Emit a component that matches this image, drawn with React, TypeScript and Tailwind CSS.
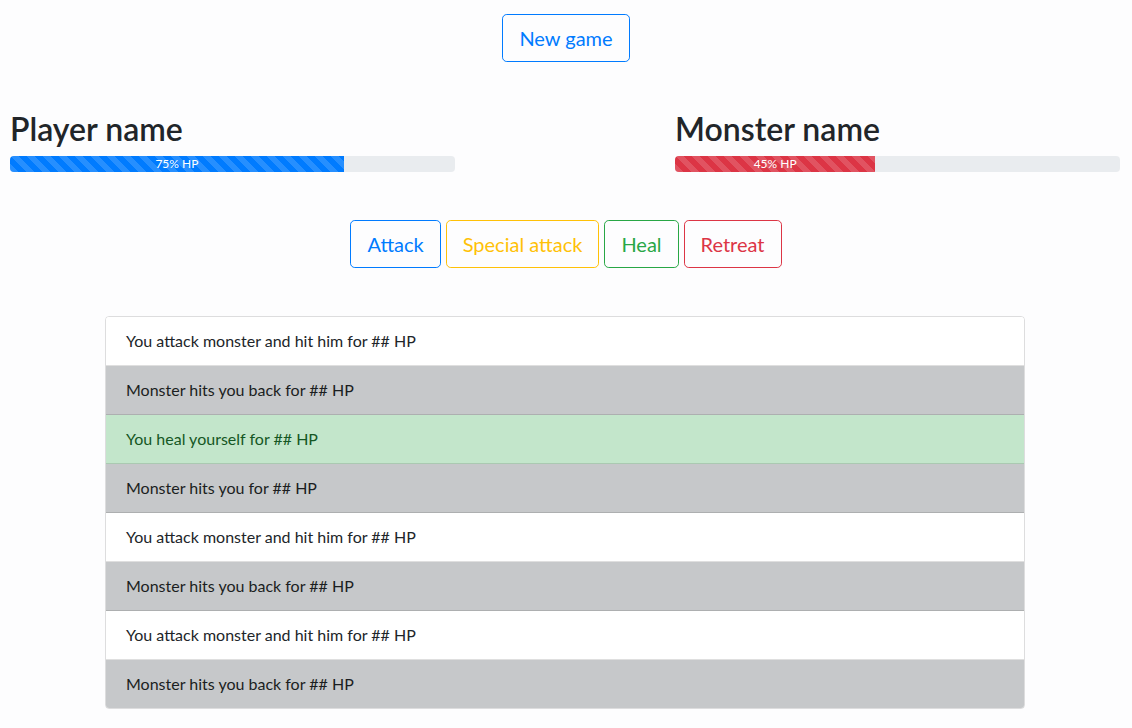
const stripes =
    'bg-[linear-gradient(45deg,rgba(255,255,255,.15)_25%,transparent_25%,transparent_50%,rgba(255,255,255,.15)_50%,rgba(255,255,255,.15)_75%,transparent_75%,transparent)] bg-[length:1rem_1rem]';

const logs = [
    { text: 'You attack monster and hit him for ## HP', kind: 'player' },
    { text: 'Monster hits you back for ## HP', kind: 'monster' },
    { text: 'You heal yourself for ## HP', kind: 'heal' },
    { text: 'Monster hits you for ## HP', kind: 'monster' },
    { text: 'You attack monster and hit him for ## HP', kind: 'player' },
    { text: 'Monster hits you back for ## HP', kind: 'monster' },
    { text: 'You attack monster and hit him for ## HP', kind: 'player' },
    { text: 'Monster hits you back for ## HP', kind: 'monster' },
];

function Fighter({ name, hp, barClass }: { name: string; hp: number; barClass: string }) {
    return (
        <div className="w-[445px]">
            <h2 className="text-[32px] leading-[38.4px] font-semibold mb-2 text-[#212529]">{name}</h2>
            <div className="flex h-4 rounded bg-[#e9ecef] overflow-hidden">
                <div
                    className={`${barClass} ${stripes} flex justify-center items-center text-white text-[12px] leading-4`}
                    style={{ width: `${hp}%` }}
                >
                    {hp}% HP
                </div>
            </div>
        </div>
    );
}

export default function App() {
    return (
        <div className="min-h-screen bg-[#fdfdfe] text-[#212529] font-['Lato',sans-serif] pt-[14px]">
            {/* New game */}
            <div className="flex justify-center">
                <button className="h-12 px-4 text-[20px] leading-[30px] rounded-[4.8px] border border-[#007bff] text-[#007bff]">
                    New game
                </button>
            </div>

            {/* Fighters */}
            <div className="flex justify-between pl-[10px] pr-[12px] mt-12">
                <Fighter name="Player name" hp={75} barClass="bg-[#007bff]" />
                <Fighter name="Monster name" hp={45} barClass="bg-[#dc3545]" />
            </div>

            {/* Actions */}
            <div className="flex justify-center gap-[5px] mt-12">
                <button className="h-12 px-4 text-[20px] leading-[30px] rounded-[4.8px] border border-[#007bff] text-[#007bff]">
                    Attack
                </button>
                <button className="h-12 px-4 text-[20px] leading-[30px] rounded-[4.8px] border border-[#ffc107] text-[#ffc107]">
                    Special attack
                </button>
                <button className="h-12 px-4 text-[20px] leading-[30px] rounded-[4.8px] border border-[#28a745] text-[#28a745]">
                    Heal
                </button>
                <button className="h-12 px-4 text-[20px] leading-[30px] rounded-[4.8px] border border-[#dc3545] text-[#dc3545]">
                    Retreat
                </button>
            </div>

            {/* Log */}
            <div className="flex justify-center pr-[2px] mt-12">
                <ul className="w-[920px] border border-black/[.125] rounded overflow-hidden divide-y divide-black/[.125]">
                    {logs.map((log, i) => (
                        <li
                            key={i}
                            className={
                                'px-5 py-3 text-base leading-6 ' +
                                (log.kind === 'monster'
                                    ? 'bg-[#c6c8ca] text-[#1b1e21]'
                                    : log.kind === 'heal'
                                      ? 'bg-[#c3e6cb] text-[#155724]'
                                      : 'bg-white text-[#212529]')
                            }
                        >
                            {log.text}
                        </li>
                    ))}
                </ul>
            </div>
        </div>
    );
}
